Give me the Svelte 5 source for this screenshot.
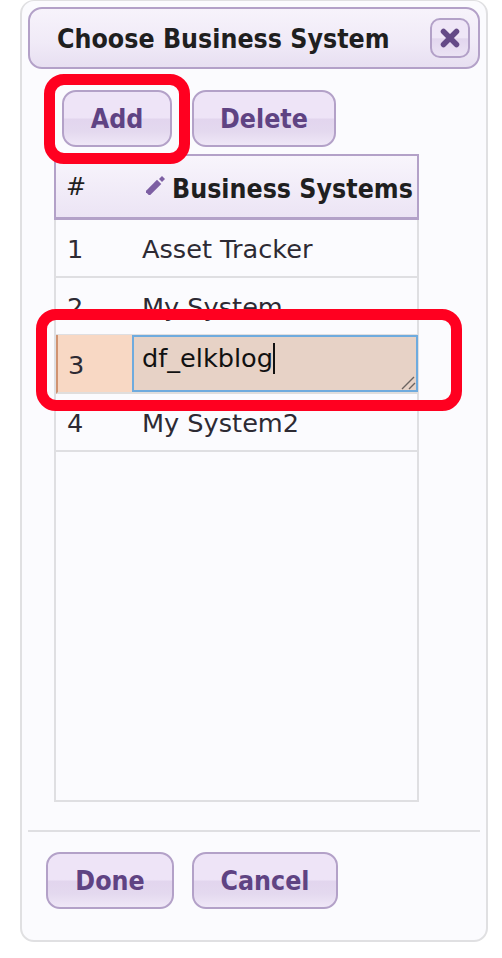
<script lang="ts">
  const systems = [
    { id: 1, name: "Asset Tracker" },
    { id: 2, name: "My System" },
    { id: 3, name: "df_elkblog", editing: true },
    { id: 4, name: "My System2" },
  ];
</script>

<div class="page">
  <div class="panel">
    <header class="titlebar">
      <h1>Choose Business System</h1>
      <button type="button" class="close" aria-label="Close">
        <svg width="22" height="22" viewBox="0 0 22 22">
          <path d="M4.5 4.5 L17.5 17.5 M17.5 4.5 L4.5 17.5" stroke="#644a87" stroke-width="5.5" stroke-linecap="round" />
        </svg>
      </button>
    </header>

    <div class="toolbar">
      <button type="button" class="btn add">Add</button>
      <button type="button" class="btn delete">Delete</button>
    </div>

    <div class="table">
      <div class="thead">
        <div class="th num">#</div>
        <div class="th name">
          <svg class="pencil" width="20" height="20" viewBox="0 0 20 20">
            <path d="M3.5 16.5 L11 9" stroke="#7d5fa3" stroke-width="6" stroke-linecap="square" />
            <path d="M16 1 L19 4 L16 7 L13 4 Z" fill="#7d5fa3" />
          </svg>
          Business Systems
        </div>
      </div>
      {#each systems as row (row.id)}
        <div class="row" class:editing={row.editing}>
          <div class="cell num">{row.id}</div>
          {#if row.editing}
            <div class="cell editor">
              <span class="value">{row.name}</span><span class="caret"></span>
              <svg class="grip" width="16" height="16" viewBox="0 0 16 16">
                <path d="M2 15 L14 3 M9 15 L15 9" stroke="#6b6460" stroke-width="1.4" />
              </svg>
            </div>
          {:else}
            <div class="cell name">{row.name}</div>
          {/if}
        </div>
      {/each}
    </div>

    <footer class="footer">
      <button type="button" class="btn done">Done</button>
      <button type="button" class="btn cancel">Cancel</button>
    </footer>
  </div>

  <div class="mark mark-add"></div>
  <div class="mark mark-row"></div>
</div>

<style>
  :global(body) {
    margin: 0;
    background: #fff;
  }

  .page {
    position: relative;
    width: 502px;
    height: 958px;
    overflow: hidden;
    font-family: "DejaVu Sans", "Open Sans", sans-serif;
  }

  .panel {
    box-sizing: border-box;
    width: 468px;
    height: 942px;
    margin-left: 20px;
    border: 2px solid #e0e0e2;
    border-top-width: 1px;
    border-radius: 14px;
    background: #fbfbfe;
    padding: 6px 6px 0;
  }

  .titlebar {
    box-sizing: border-box;
    height: 62px;
    display: flex;
    align-items: center;
    justify-content: space-between;
    padding: 0 8px 0 27px;
    border: 2px solid #b3a1c8;
    border-radius: 14px;
    background: linear-gradient(#f7f3fb, #f0eaf7 60%, #e7dff1);
  }

  h1 {
    margin: 0;
    font-size: 26.5px;
    font-weight: 700;
    font-stretch: condensed;
    color: #1f1f1f;
  }

  .close {
    box-sizing: border-box;
    width: 40px;
    height: 40px;
    padding: 0;
    display: flex;
    align-items: center;
    justify-content: center;
    border: 2px solid #b3a1c8;
    border-radius: 10px;
    background: linear-gradient(#efe6f7 50%, #e2d6ee 52%, #ebe3f4);
  }

  .toolbar {
    display: flex;
    gap: 20px;
    padding: 21px 0 0 34px;
  }

  .btn {
    box-sizing: border-box;
    height: 57px;
    padding: 0;
    border: 2px solid #b3a1c8;
    border-radius: 14px;
    background: linear-gradient(#eee4f7 48%, #e2d5ee 52%, #e4d9ef 75%, #efe7f7);
    color: #5f4383;
    font-family: "DejaVu Sans", "Open Sans", sans-serif;
    font-size: 26.5px;
    font-weight: 700;
    font-stretch: condensed;
  }

  .add { width: 110px; }
  .delete { width: 144px; }
  .done { width: 128px; }
  .cancel { width: 146px; }

  .table {
    box-sizing: border-box;
    width: 365px;
    height: 648px;
    margin: 7px 0 0 26px;
    border: 2px solid #dfdfe2;
    border-top: 0;
    color: #2d2a33;
    font-size: 25.6px;
  }

  .thead {
    box-sizing: border-box;
    height: 66px;
    margin: 0 -2px;
    display: grid;
    grid-template-columns: 78px 1fr;
    align-items: center;
    border: 2px solid #b3a1c8;
    border-bottom: 0;
    box-shadow: inset 0 -3px 0 #b3a1c8;
    background: linear-gradient(#f8f5fc, #ebe3f4);
    color: #1f1f1f;
    font-weight: 700;
    font-stretch: condensed;
    font-size: 26.5px;
  }

  .th.num {
    padding: 0 0 2px 10px;
    font-weight: 400;
    font-stretch: normal;
    font-size: 24px;
  }

  .th.name {
    display: flex;
    align-items: center;
    gap: 6px;
    margin-left: 12px;
    white-space: nowrap;
  }

  .pencil {
    margin-top: -6px;
    flex: none;
  }

  .row {
    box-sizing: border-box;
    height: 58px;
    display: grid;
    grid-template-columns: 76px 1fr;
    align-items: center;
    border-bottom: 2px solid #dfdfe2;
  }

  .cell {
    padding-top: 2px;
  }

  .row .num {
    padding-left: 11px;
  }

  .row .name {
    padding-left: 10px;
  }

  .row.editing {
    height: 59px;
    margin: -1px -1px 0 0;
    position: relative;
    grid-template-columns: 73px 1fr;
    align-items: stretch;
    background: #f8d8c4;
    border-bottom-color: #e0dedd;
    border-left: 2px solid #d09372;
  }

  .row.editing .num {
    padding: 2px 0 0 10px;
    align-self: center;
  }

  .editor {
    position: relative;
    margin-left: 1px;
    padding: 1px 0 0 8px;
    display: flex;
    align-items: flex-start;
    border: 2px solid #6fabde;
    background: #e7d2c6;
    color: #111;
    line-height: 40px;
  }

  .caret {
    width: 1.5px;
    height: 31px;
    margin-top: 5px;
    background: #111;
  }

  .grip {
    position: absolute;
    right: 0;
    bottom: 0;
  }

  .footer {
    display: flex;
    gap: 18px;
    margin-top: 28px;
    padding: 20px 0 0 18px;
    border-top: 2px solid #dfdfe2;
  }

  .mark {
    position: absolute;
    box-sizing: border-box;
    border: 11px solid #ff0020;
    border-radius: 20px;
  }

  .mark-add {
    left: 44px;
    top: 74px;
    width: 146px;
    height: 90px;
  }

  .mark-row {
    left: 36px;
    top: 309px;
    width: 426px;
    height: 102px;
  }
</style>
